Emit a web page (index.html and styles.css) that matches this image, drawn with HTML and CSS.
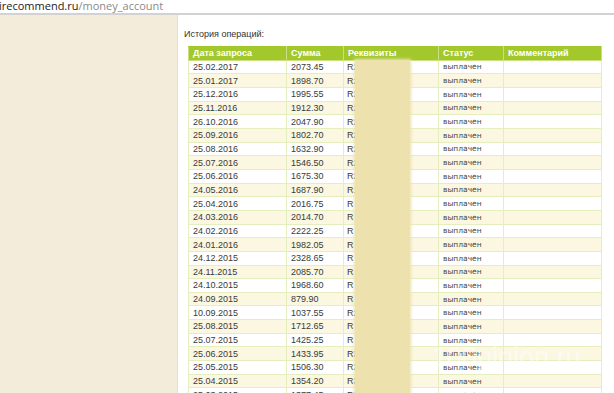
FILE: index.html
```html
<!DOCTYPE html>
<html lang="ru">
<head>
    <meta charset="UTF-8">
    <title>irecommend.ru/money_account</title>
    <link rel="stylesheet" href="styles.css">
</head>
<body>
    <div class="urlbar"><span class="host">irecommend.ru</span><span class="path">/money_account</span></div>

    <div class="page">
        <aside class="sidebar"></aside>

        <main class="content">
            <p class="caption">История операций:</p>

            <div class="table-wrap">
                <table class="ops">
                    <thead>
                        <tr>
                            <th class="c-date">Дата запроса</th>
                            <th class="c-sum">Сумма</th>
                            <th class="c-req">Реквизиты</th>
                            <th class="c-status">Статус</th>
                            <th class="c-comment">Комментарий</th>
                        </tr>
                    </thead>
                    <tbody>
                        <tr><td>25.02.2017</td><td>2073.45</td><td>R2</td><td class="status">выплачен</td><td></td></tr>
                        <tr><td>25.01.2017</td><td>1898.70</td><td>R2</td><td class="status">выплачен</td><td></td></tr>
                        <tr><td>25.12.2016</td><td>1995.55</td><td>R2</td><td class="status">выплачен</td><td></td></tr>
                        <tr><td>25.11.2016</td><td>1912.30</td><td>R2</td><td class="status">выплачен</td><td></td></tr>
                        <tr><td>26.10.2016</td><td>2047.90</td><td>R2</td><td class="status">выплачен</td><td></td></tr>
                        <tr><td>25.09.2016</td><td>1802.70</td><td>R2</td><td class="status">выплачен</td><td></td></tr>
                        <tr><td>25.08.2016</td><td>1632.90</td><td>R2</td><td class="status">выплачен</td><td></td></tr>
                        <tr><td>25.07.2016</td><td>1546.50</td><td>R2</td><td class="status">выплачен</td><td></td></tr>
                        <tr><td>25.06.2016</td><td>1675.30</td><td>R2</td><td class="status">выплачен</td><td></td></tr>
                        <tr><td>24.05.2016</td><td>1687.90</td><td>R1</td><td class="status">выплачен</td><td></td></tr>
                        <tr><td>25.04.2016</td><td>2016.75</td><td>R</td><td class="status">выплачен</td><td></td></tr>
                        <tr><td>24.03.2016</td><td>2014.70</td><td>R</td><td class="status">выплачен</td><td></td></tr>
                        <tr><td>24.02.2016</td><td>2222.25</td><td>R</td><td class="status">выплачен</td><td></td></tr>
                        <tr><td>24.01.2016</td><td>1982.05</td><td>R</td><td class="status">выплачен</td><td></td></tr>
                        <tr><td>24.12.2015</td><td>2328.65</td><td>R</td><td class="status">выплачен</td><td></td></tr>
                        <tr><td>24.11.2015</td><td>2085.70</td><td>R</td><td class="status">выплачен</td><td></td></tr>
                        <tr><td>24.10.2015</td><td>1968.60</td><td>R</td><td class="status">выплачен</td><td></td></tr>
                        <tr><td>24.09.2015</td><td>879.90</td><td>R</td><td class="status">выплачен</td><td></td></tr>
                        <tr><td>10.09.2015</td><td>1037.55</td><td>R2</td><td class="status">выплачен</td><td></td></tr>
                        <tr><td>25.08.2015</td><td>1712.65</td><td>R</td><td class="status">выплачен</td><td></td></tr>
                        <tr><td>25.07.2015</td><td>1425.25</td><td>R</td><td class="status">выплачен</td><td></td></tr>
                        <tr><td>25.06.2015</td><td>1433.95</td><td>R3</td><td class="status">выплачен</td><td></td></tr>
                        <tr><td>25.05.2015</td><td>1506.30</td><td>R2</td><td class="status">выплачен</td><td></td></tr>
                        <tr><td>25.04.2015</td><td>1354.20</td><td>R3</td><td class="status">выплачен</td><td></td></tr>
                        <tr><td>25.03.2015</td><td>1377.45</td><td>R2</td><td class="status">выплачен</td><td></td></tr>
                    </tbody>
                </table>

                <!-- blurred patch hiding the wallet numbers -->
                <div class="redact"></div>
            </div>

            <div class="watermark">100pinion.ru</div>
        </main>
    </div>
</body>
</html>
```

FILE: styles.css
```css
* {
    margin: 0;
    padding: 0;
    box-sizing: border-box;
}

body {
    background: #fff;
    height: 100vh;
    overflow: hidden;
    font-family: 'Liberation Sans', Arial, sans-serif;
    color: #333;
}

/* Address bar */
.urlbar {
    height: 15px;
    margin-left: -1px;
    font-family: 'Open Sans', 'Liberation Sans', sans-serif;
    font-size: 11px;
    line-height: 12px;
    white-space: nowrap;
    border-bottom: 2px solid #d2d2d2;
}

.urlbar .host {
    color: #222;
}

.urlbar .path {
    color: #8a8a8a;
}

/* Page */
.page {
    display: flex;
    height: calc(100vh - 15px);
}

.sidebar {
    width: 178px;
    flex: none;
    background: #f4ecda;
    border-right: 1px solid #e8dfc8;
}

.content {
    flex: 1;
    position: relative;
    padding: 13px 12px 0 6px;
}

.caption {
    font-size: 9px;
    line-height: 12px;
    color: #333;
    margin-bottom: 6px;
}

/* Operations table */
.table-wrap {
    position: relative;
    margin-left: 4px;
    width: 414px;
}

.ops {
    width: 100%;
    border-collapse: collapse;
    table-layout: fixed;
    font-size: 9px;
}

.ops th,
.ops td {
    height: 13.66px;
    padding: 0 4px;
    border: 1px solid #e4eebf;
    text-align: left;
    white-space: nowrap;
    overflow: hidden;
}

.ops th {
    background: #a2c82c;
    color: #fff;
    font-weight: bold;
    border-color: #c9df80;
    border-top-color: #a2c82c;
}

.ops td {
    color: #3a3a3a;
}

.ops tbody tr:nth-child(even) td {
    background: #fbf7e1;
}

.ops .c-date { width: 98px; }
.ops .c-sum { width: 57px; }
.ops .c-req { width: 95px; }
.ops .c-status { width: 65px; }

.ops td:nth-child(3) {
    padding-left: 3px;
}

.ops td.status {
    font-family: 'DejaVu Sans', sans-serif;
    font-size: 7.5px;
    color: #444;
}

.redact {
    position: absolute;
    top: 14px;
    bottom: -20px;
    left: 167px;
    width: 55px;
    background: #ede1ae;
    box-shadow: 0 0 3px 1px #ede1ae;
}

.watermark {
    position: absolute;
    left: 254px;
    top: 327px;
    font-family: 'Liberation Sans', sans-serif;
    font-size: 27px;
    color: rgba(255, 255, 255, 0.5);
    pointer-events: none;
}
```
